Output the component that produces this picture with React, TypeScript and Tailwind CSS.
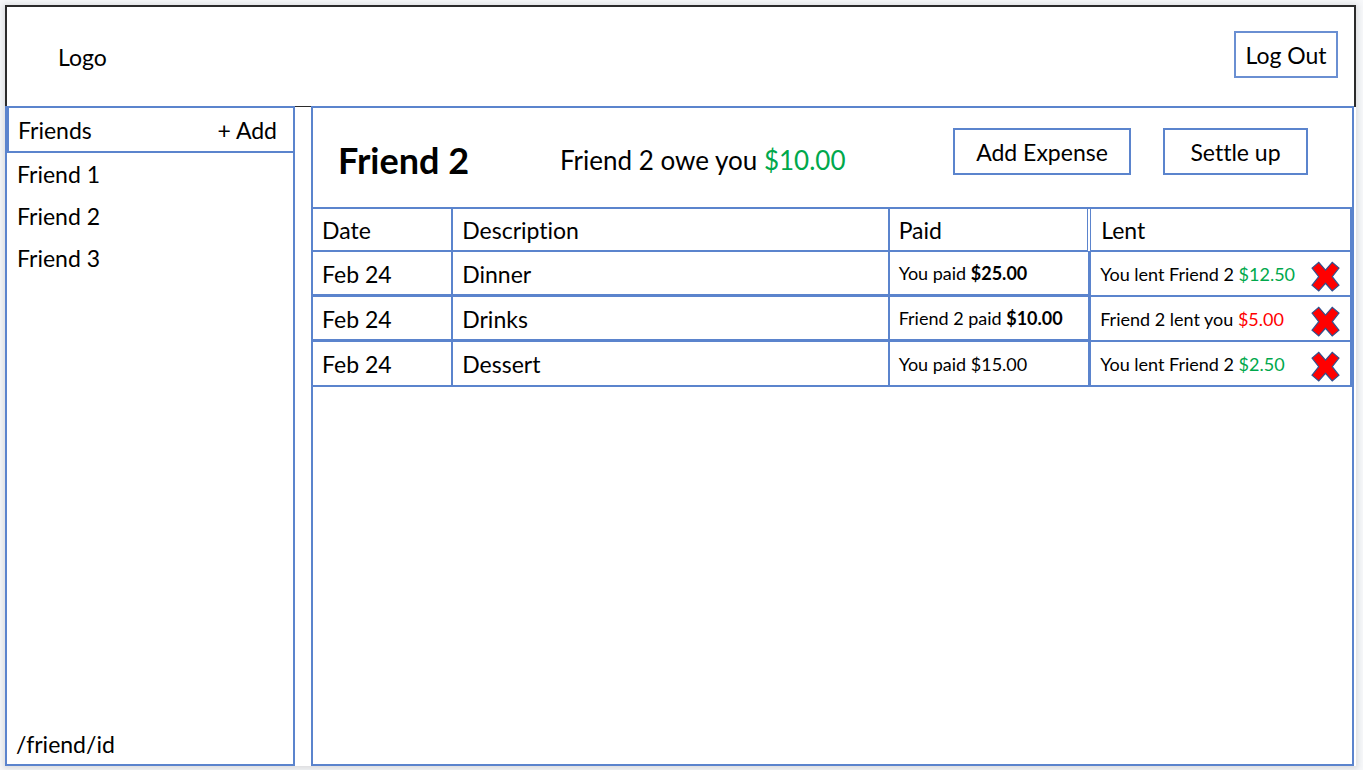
import React from "react";

type Tone = "owed" | "owing";

interface Expense {
  date: string;
  description: string;
  payer: string;
  paid: string;
  boldPaid: boolean;
  lender: string;
  lent: string;
  tone: Tone;
}

const friends = ["Friend 1", "Friend 2", "Friend 3"];

const expenses: Expense[] = [
  { date: "Feb 24", description: "Dinner", payer: "You paid", paid: "$25.00", boldPaid: true, lender: "You lent Friend 2", lent: "$12.50", tone: "owed" },
  { date: "Feb 24", description: "Drinks", payer: "Friend 2 paid", paid: "$10.00", boldPaid: true, lender: "Friend 2 lent you", lent: "$5.00", tone: "owing" },
  { date: "Feb 24", description: "Dessert", payer: "You paid", paid: "$15.00", boldPaid: false, lender: "You lent Friend 2", lent: "$2.50", tone: "owed" },
];

function CrossIcon() {
  return (
    <svg viewBox="34 37 86 92" className="block h-[31px] w-[29px]" aria-hidden="true">
      <path
        d="M37 58 L57 41 L77 64 L97 41 L117 58 L97 83.500 L117 109 L97 126 L77 103 L57 126 L37 109 L57 83.500 Z"
        fill="#ff0000"
        stroke="#2f528f"
        strokeWidth="3.500"
      />
    </svg>
  );
}

function Header() {
  return (
    <header className="flex h-[101px] items-start justify-between border-2 border-b-0 border-[#2b2b2b] pr-4 pl-[51px]">
      <a href="#home" className="mt-[34px] leading-8">Logo</a>
      <button type="button" className="mt-6 h-[47px] w-[104px] border-2 border-[#6a8fd2] pt-[2px]">Log Out</button>
    </header>
  );
}

function Sidebar() {
  return (
    <aside className="flex w-[290px] shrink-0 flex-col border-2 border-[#5b84cd]">
      <div className="flex h-[45px] items-center justify-between border-b-2 border-l-2 border-[#5b84cd] pt-[2px] pr-4 pl-[9px]">
        <h2>Friends</h2>
        <button type="button">+ Add</button>
      </div>
      <nav className="pl-[10px]">
        <ul>
          {friends.map((name) => (
            <li key={name} className="flex h-[42px] items-center">
              <a href="#friend">{name}</a>
            </li>
          ))}
        </ul>
      </nav>
      <p className="mt-auto pb-1 pl-[9px] leading-8">/friend/id</p>
    </aside>
  );
}

function ExpenseTable() {
  return (
    <table className="w-full table-fixed border-separate border-spacing-0 border-t-2 border-[#5b84cd] text-left">
      <colgroup>
        <col className="w-[13.5%]" />
        <col className="w-[42%]" />
        <col className="w-[19.4%]" />
        <col />
      </colgroup>
      <thead>
        <tr className="h-[43px]">
          <th className="border-r-2 border-b-2 border-[#5b84cd] pt-[2px] pl-[9px] font-normal">Date</th>
          <th className="border-r-2 border-b-2 border-[#5b84cd] pt-[2px] pl-[9px] font-normal">Description</th>
          <th className="border-r-4 border-b-2 border-[#5b84cd] pt-[2px] pl-[9px] font-normal [border-right-style:double]">Paid</th>
          <th className="border-r-2 border-b-2 border-[#5b84cd] pt-[2px] pl-[10px] font-normal">Lent</th>
        </tr>
      </thead>
      <tbody>
        {expenses.map((item) => (
          <tr key={item.description} className="group h-[45px]">
            <td className="border-r-2 border-b-3 border-[#5b84cd] pt-[2px] pl-[9px] group-last:border-b-2">{item.date}</td>
            <td className="border-r-2 border-b-3 border-[#5b84cd] pt-[2px] pl-[9px] group-last:border-b-2">{item.description}</td>
            <td className="border-r-3 border-b-3 border-[#5b84cd] pl-[9px] text-lg leading-6 group-last:border-b-2">
              {item.payer} <span className={item.boldPaid ? "font-bold" : ""}>{item.paid}</span>
            </td>
            <td className="border-r-2 border-b-2 border-[#5b84cd] pr-[10px] pl-[9px] text-lg leading-6">
              <div className="flex items-center justify-between">
                <span>
                  {item.lender}{" "}
                  <span className={item.tone === "owed" ? "text-[#00a84c]" : "text-[#ff0000]"}>{item.lent}</span>
                </span>
                <button type="button" aria-label={"Delete " + item.description} className="pt-[5px]">
                  <CrossIcon />
                </button>
              </div>
            </td>
          </tr>
        ))}
      </tbody>
    </table>
  );
}

function FriendDetail() {
  return (
    <main className="min-w-0 grow border-2 border-[#5b84cd]">
      <div className="flex h-[99px] items-start pr-11 pl-[25px]">
        <h1 className="mt-7 w-[222px] text-4xl leading-12 font-bold">Friend 2</h1>
        <p className="mt-7 text-[26px] leading-12">
          Friend 2 owe you <span className="text-[#00a84c]">$10.00</span>
        </p>
        <div className="mt-5 ml-auto flex gap-8">
          <button type="button" className="h-[47px] w-[178px] border-2 border-[#5b84cd] pt-[2px]">Add Expense</button>
          <button type="button" className="h-[47px] w-[145px] border-2 border-[#5b84cd] pt-[2px]">Settle up</button>
        </div>
      </div>
      <ExpenseTable />
    </main>
  );
}

export default function App() {
  return (
    <div className="flex min-h-screen flex-col bg-[#f7f8fa] pt-[5px] pr-[7px] pb-1 pl-[5px] font-['Lato',sans-serif] text-[23px] text-black [font-variant-ligatures:none]">
      <div className="flex grow flex-col bg-white shadow-[0_1px_6px_2px_rgba(60,64,67,0.15)]">
        <Header />
        <div className="flex grow">
          <Sidebar />
          <div className="w-4 shrink-0 border-t border-[#2b2b2b]" />
          <FriendDetail />
          <div className="w-[2px] shrink-0 border-t border-[#2b2b2b]" />
        </div>
      </div>
    </div>
  );
}
